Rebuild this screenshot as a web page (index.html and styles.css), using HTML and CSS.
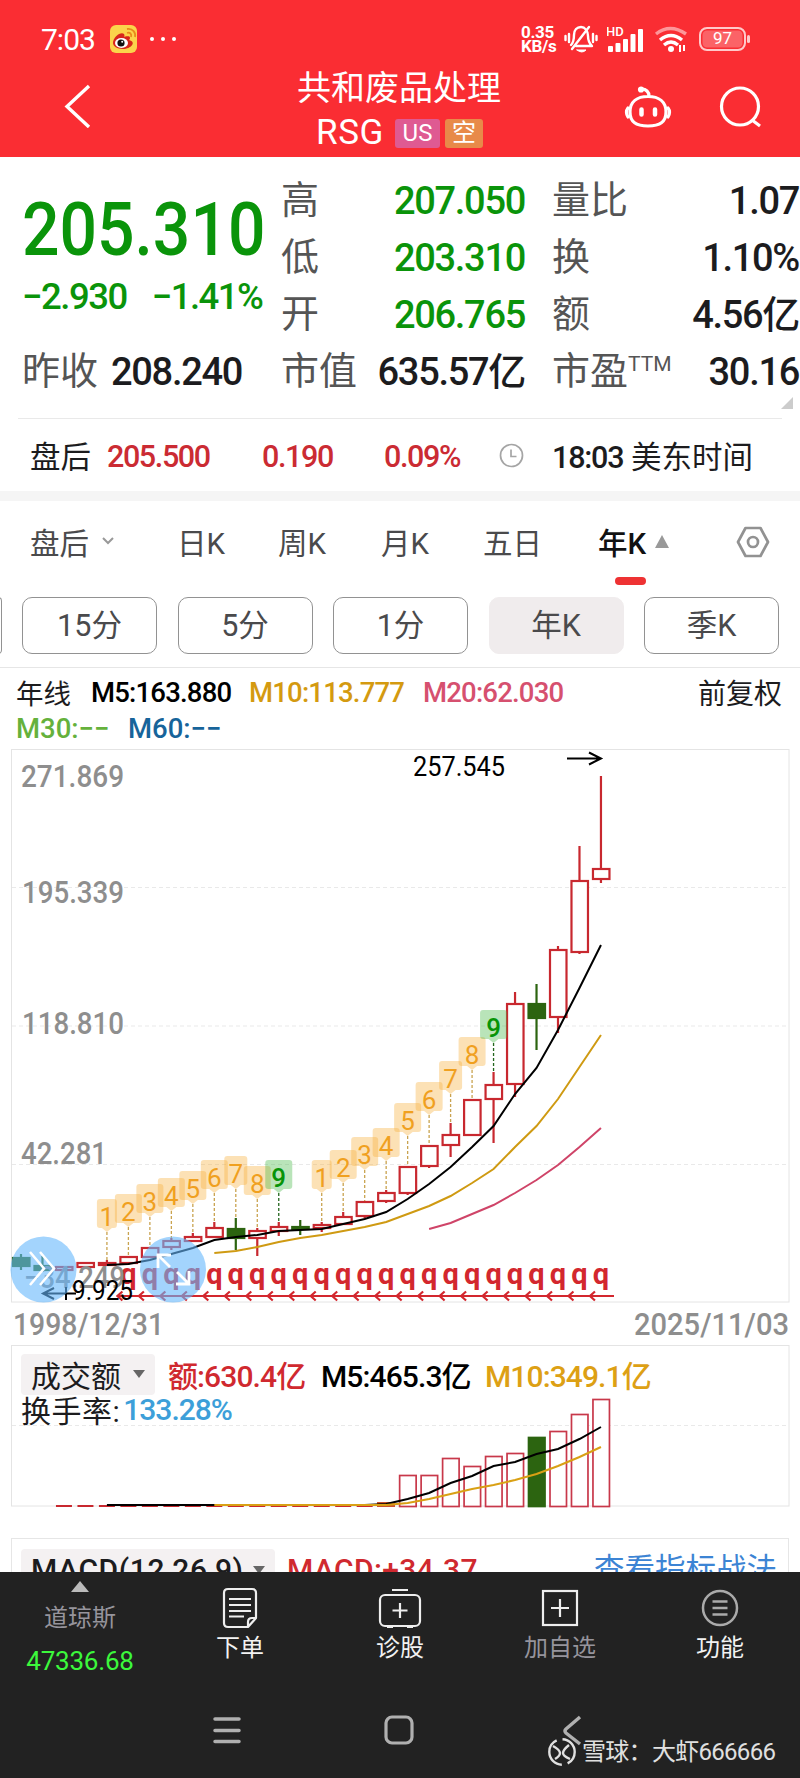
FILE: index.html
```
<!DOCTYPE html>
<html lang="zh-CN">
	<head>
		<meta charset="utf-8">
		<title>共和废品处理 RSG</title>
		<link rel="stylesheet" href="styles.css">
	</head>
	<body>
		<header class="top">
			<div class="status">
				<span class="time">7:03</span>
				<svg class="weibo" width="27" height="28" viewBox="0 0 27 28">
					<rect width="27" height="28" rx="6" fill="#fbd44b"/>
					<path d="M3 18c0-6 8-12 11-9 1 1 0 3 0 3s6-2 6 1c0 1-1 2-1 2 8 2 2 9-6 9-6 0-10-3-10-6z" fill="#d8261c"/>
					<ellipse cx="11.500" cy="18" rx="6.500" ry="5" fill="#fff"/>
					<circle cx="11" cy="18" r="3.600" fill="#111"/>
					<circle cx="12.200" cy="16.800" r="1" fill="#fff"/>
					<path d="M17 8c3-1 5 1 4 4M17 4c6-1 9 4 8 8" fill="none" stroke="#e98b1c" stroke-width="1.800"/>
				</svg>
				<span class="dots"><i></i><i></i><i></i></span>
				<span class="speed">0.35<br>KB/s</span>
				<svg class="bell" width="34" height="30" viewBox="0 0 34 30" fill="none" stroke="#fff" stroke-width="2.400" stroke-linecap="round">
					<path d="M12 22h16c-3-3-4-6-4-10 0-5-3-9-7-9s-7 3-7 8c0 4 0 7-3 10" stroke-linejoin="round"/>
					<path d="M25 3L8 25M5 10v8M1.500 12v4M29 10v8M32.500 12v4"/>
					<path d="M13 26h9q-4 4-9 0z" fill="#fff" stroke-width="1"/>
				</svg>
				<svg class="signal" width="37" height="28" viewBox="0 0 37 28">
					<text x="-1" y="11" class="hd">HD</text>
					<g fill="#fff"><rect x="1" y="21" width="5" height="6" rx="1"/><rect x="8.500" y="18" width="5" height="9" rx="1"/><rect x="16" y="14" width="5" height="13" rx="1"/><rect x="23.500" y="9" width="5" height="18" rx="1"/><rect x="31" y="4" width="5" height="23" rx="1"/></g>
				</svg>
				<svg class="wifi" width="34" height="28" viewBox="0 0 34 28" fill="none" stroke="#fff" stroke-width="3.400">
					<path d="M2 9q14-11 30 0" opacity=".5"/>
					<path d="M6 15q11-9 22 0M10 20q7-6 14 0"/>
					<circle cx="17" cy="24" r="3" fill="#fff" stroke="none"/>
					<path d="M26 20v7M30 26v-6" stroke-width="2"/>
				</svg>
				<span class="battery">97</span>
			</div>
			<div class="titlebar">
				<svg class="back" width="28" height="44" viewBox="0 0 28 44"><path d="M25 2L3 22.500 25 43" fill="none" stroke="#fff" stroke-width="3.400"/></svg>
				<div class="name">
					<h1>共和废品处理</h1>
					<p><span class="code">RSG</span><span class="tag us">US</span><span class="tag short">空</span></p>
				</div>
				<svg class="robot" width="48" height="44" viewBox="0 0 48 44" fill="none" stroke="#fff" stroke-width="3.200" stroke-linecap="round">
					<path d="M24 10.500C35 10.500 42 16 42 26S36 40 24 40 6 36 6 26 13 10.500 24 10.500zM25 10C25 6 22 3 18 3"/>
					<path d="M4 22q-3 4 0 9M44 22q3 4 0 9"/>
					<path d="M17.500 23.500v5M31 23.500v5" stroke-width="4.500"/>
					<circle cx="17" cy="3.500" r="1.500"/>
				</svg>
				<svg class="search" width="44" height="44" viewBox="0 0 44 44" fill="none" stroke="#fff" stroke-width="3.200"><circle cx="21" cy="20.500" r="18.500"/><path d="M33 34l8 6"/></svg>
			</div>
		</header>

		<section class="quote">
			<div class="price">
				<strong>205.310</strong>
				<div class="change"><span>−2.930</span><span>−1.41%</span></div>
				<div class="cell"><label>昨收</label><b>208.240</b></div>
			</div>
			<div class="col mid">
				<div class="cell"><label>高</label><b class="down">207.050</b></div>
				<div class="cell"><label>低</label><b class="down">203.310</b></div>
				<div class="cell"><label>开</label><b class="down">206.765</b></div>
				<div class="cell"><label>市值</label><b>635.57亿</b></div>
			</div>
			<div class="col last">
				<div class="cell"><label>量比</label><b>1.07</b></div>
				<div class="cell"><label>换</label><b>1.10%</b></div>
				<div class="cell"><label>额</label><b>4.56亿</b></div>
				<div class="cell"><label>市盈<sup>TTM</sup></label><b>30.16</b></div>
			</div>
			<i class="corner"></i>
		</section>

		<section class="after">
			<span class="lbl">盘后</span>
			<b class="a1">205.500</b>
			<b class="a2">0.190</b>
			<b class="a3">0.09%</b>
			<svg class="clock" width="25" height="25" viewBox="0 0 25 25" fill="none" stroke="#a5a5a5" stroke-width="1.700"><circle cx="12.500" cy="12.500" r="11"/><path d="M12 6.500v7h5.500"/></svg>
			<span class="at"><em>18:03</em> 美东时间</span>
		</section>

		<nav class="tabs">
			<span class="t0">盘后</span>
			<svg class="chev" width="14" height="10" viewBox="0 0 14 10"><path d="M2 2l5 5 5-5" fill="none" stroke="#999" stroke-width="2"/></svg>
			<span class="t1">日K</span>
			<span class="t2">周K</span>
			<span class="t3">月K</span>
			<span class="t4">五日</span>
			<span class="t5 on">年K</span>
			<i class="up"></i>
			<svg class="hex" width="34" height="32" viewBox="0 0 34 32" fill="none" stroke="#929292" stroke-width="2.700"><path d="M9.500 2h15L32 16l-7.500 14h-15L2 16z" stroke-linejoin="round"/><circle cx="17" cy="16" r="5"/></svg>
		</nav>
		<div class="periods">
			<span class="cut"></span><span>15分</span><span>5分</span><span>1分</span><span class="sel">年K</span><span>季K</span>
		</div>

		<section class="ma">
			<div class="line"><span class="m0">年线</span><span class="m5">M5:163.880</span><span class="m10">M10:113.777</span><span class="m20">M20:62.030</span><span class="adj">前复权</span></div>
			<div class="line second"><span class="m30">M30:−−</span><span class="m60">M60:−−</span></div>
		</section>

		<svg id="kline" width="800" height="606" viewBox="0 740 800 606"></svg>

		<section class="volume">
			<div class="line"><span class="pill">成交额 <i class="dn"></i></span><span class="v0">额:630.4亿</span><span class="v5">M5:465.3亿</span><span class="v10">M10:349.1亿</span></div>
			<div class="line rate">换手率:<span>133.28%</span></div>
			<svg id="vol" width="800" height="164" viewBox="0 1345 800 164"></svg>
		</section>

		<section class="macd">
			<span class="pill">MACD(12,26,9)<i class="dn"></i></span>
			<span class="val">MACD:+34.37</span>
			<a>查看指标战法</a>
		</section>

		<footer>
			<div class="menu">
				<div class="index"><i class="up"></i><span>道琼斯</span><b>47336.68</b></div>
				<div class="item">
					<svg width="38" height="42" viewBox="0 0 38 42" fill="none" stroke="#eee" stroke-width="2.200"><path d="M7 2h24q4 0 4 4v25l-8 9H7q-4 0-4-4V6q0-4 4-4zM35 31h-4q-4 0-4 4v5" stroke-linejoin="round"/><path d="M8 12h22M8 18h22M8 24h22M8 29.500h15"/></svg>
					<span>下单</span>
				</div>
				<div class="item">
					<svg width="44" height="42" viewBox="0 0 44 42" fill="none" stroke="#eee" stroke-width="2.200"><rect x="2" y="8" width="40" height="31" rx="5"/><path d="M14 3h16M22 16v15M14.500 23.500h15M9 40h6M29 40h6"/></svg>
					<span>诊股</span>
				</div>
				<div class="item dim">
					<svg width="38" height="42" viewBox="0 0 38 42" fill="none" stroke="#eee" stroke-width="2.200"><rect x="2" y="4" width="34" height="34"/><path d="M19 12v18M10 21h18"/></svg>
					<span>加自选</span>
				</div>
				<div class="item">
					<svg width="38" height="42" viewBox="0 0 38 42" fill="none" stroke="#aaa" stroke-width="2.500"><circle cx="19" cy="21" r="17"/><path d="M11.500 14.500h15M11.500 21h15M11.500 27.500h15"/></svg>
					<span>功能</span>
				</div>
			</div>
			<div class="sys">
				<svg width="30" height="30" viewBox="0 0 30 30" stroke="#b0b0b0" stroke-width="3.500" stroke-linecap="round"><path d="M3 4h24M3 15.500h24M3 26.500h24"/></svg>
				<svg width="32" height="32" viewBox="0 0 32 32"><rect x="3" y="3" width="26" height="26" rx="6" fill="none" stroke="#b0b0b0" stroke-width="3.200"/></svg>
				<svg width="22" height="34" viewBox="0 0 22 34"><path d="M18 4L4 16q-2 2 0 4l14 11" fill="none" stroke="#b0b0b0" stroke-width="3.400"/></svg>
			</div>
			<div class="mark">
				<svg width="30" height="30" viewBox="0 0 30 30" fill="none" stroke="#e0e0e0" stroke-width="2.400"><circle cx="15" cy="15" r="12.700" stroke-dasharray="34 6" stroke-dashoffset="20"/><path d="M6 9q7 4 7 7t-5 6M22 8q-6 5-6 8t7 6"/></svg>
				<span>雪球：大虾666666</span>
			</div>
		</footer>
		<script src="chart.js"></script>
	</body>
</html>
```
FILE: styles.css
```
* {
	box-sizing: border-box;
}
body {
	margin: 0;
	width: 800px;
	height: 1778px;
	overflow: hidden;
	background: #fff;
	color: #1c1c1e;
	font-family: Roboto, "Noto Sans CJK SC", sans-serif;
	display: flex;
	flex-direction: column;
}
body > * {
	flex-shrink: 0;
}
svg {
	display: block;
	flex-shrink: 0;
}
b, em {
	font-style: normal;
	font-weight: 500;
}
h1, p {
	margin: 0;
}
span, label, b, a {
	white-space: nowrap;
}

/* header */
.top {
	height: 157px;
	background: #fa2d33;
	color: #fff;
	padding-top: 22px;
}
.status {
	display: flex;
	align-items: center;
	height: 34px;
	padding-left: 41px;
}
.time {
	width: 69px;
	font-size: 30px;
	letter-spacing: -1px;
}
.dots {
	display: flex;
	gap: 7px;
	margin-left: 13px;
	width: 371px;
}
.dots i {
	width: 4px;
	height: 4px;
	border-radius: 50%;
	background: #fff;
}
.speed {
	width: 43px;
	font-size: 17px;
	line-height: 14px;
	font-weight: 700;
	letter-spacing: -.3px;
}
.signal {
	margin-left: 9px;
}
.hd {
	font: 500 13px Roboto;
	fill: #fff;
}
.wifi {
	margin-left: 10px;
}
.battery {
	position: relative;
	margin-left: 11px;
	width: 47px;
	height: 24px;
	border: 2.500px solid #ffc9ca;
	border-radius: 8px;
	background: #fb6367;
	box-shadow: inset 0 0 0 1.500px #fa2d33;
	font-size: 17px;
	line-height: 19px;
	text-align: center;
}
.battery::after {
	content: "";
	position: absolute;
	right: -6px;
	top: 6px;
	width: 3px;
	height: 8px;
	border-radius: 2px;
	background: #ffc9ca;
}
.titlebar {
	display: flex;
	height: 101px;
	padding-left: 64px;
}
.back {
	margin-top: 28px;
}
.name {
	width: 206px;
	margin-left: 205px;
	padding-top: 9px;
}
.name h1 {
	font-size: 34px;
	line-height: 46px;
	font-weight: 400;
	white-space: nowrap;
}
.name p {
	display: flex;
	align-items: center;
	height: 44px;
	padding-left: 19px;
	margin-top: 0;
}
.code {
	width: 79px;
	font-size: 35px;
	line-height: 42px;
	letter-spacing: .6px;
}
.tag {
	height: 29px;
	border-radius: 3px;
	font-size: 24px;
	line-height: 29px;
	text-align: center;
}
.us {
	width: 45px;
	background: #df5a92;
}
.short {
	width: 38px;
	margin-left: 5px;
	background: #e88a49;
}
.robot {
	margin: 30px 0 0 121px;
}
.search {
	margin: 30px 0 0 47px;
}

/* quote */
.quote {
	position: relative;
	display: flex;
	height: 262px;
	padding: 14px 1px 0 22px;
}
.quote::after {
	content: "";
	position: absolute;
	left: 18px;
	right: 18px;
	bottom: 0;
	height: 1px;
	background: #e9e9e9;
}
.price {
	width: 259px;
	color: #0a940a;
}
.price strong {
	display: block;
	height: 102px;
	font-size: 75px;
	line-height: 116px;
	font-weight: 500;
	transform: scaleX(.88);
	transform-origin: left;
}
.change {
	display: flex;
	gap: 25px;
	height: 69px;
	font-size: 36.500px;
	font-weight: 500;
	line-height: 48px;
	letter-spacing: -1.500px;
}
.cell {
	display: flex;
	justify-content: space-between;
	height: 57px;
	line-height: 58px;
	font-size: 38px;
	letter-spacing: -1.300px;
	color: #1c1c1e;
}
.cell label {
	font-size: 38px;
	letter-spacing: 0;
	color: #555;
}
.cell b {
	padding-top: 1px;
}
.price .cell {
	justify-content: flex-start;
	gap: 13px;
}
.mid {
	width: 245px;
}
.last {
	width: 248px;
	margin-left: 27px;
}
.cell .down {
	color: #0a940a;
}
.cell sup {
	display: inline-block;
	font-size: 21px;
	line-height: 20px;
	vertical-align: 13px;
	letter-spacing: 0;
}
.corner {
	position: absolute;
	right: 7px;
	bottom: 10px;
	border-left: 12px solid transparent;
	border-bottom: 12px solid #ccc;
}
.after {
	display: flex;
	align-items: center;
	height: 72px;
	padding: 0 0 0 30px;
	font-size: 30.500px;
}
.after b {
	color: #cb2b33;
	padding-top: 2px;
	letter-spacing: -1.400px;
}
.lbl {
	width: 77px;
}
.a1 {
	width: 155px;
}
.a2 {
	width: 122px;
}
.a3 {
	width: 115px;
}
.clock {
	margin-right: 28px;
}
.at em {
	letter-spacing: -1.200px;
}

/* tabs */
.tabs {
	display: flex;
	align-items: center;
	height: 96px;
	padding: 0 0 6px 30px;
	border-top: 10px solid #f5f5f5;
	font-size: 29.500px;
	color: #4a4a4c;
}
.chev {
	margin: 0 62px 0 11px;
	width: 14px;
}
.t0 {
	width: 60px;
}
.t1 {
	width: 101px;
}
.t2 {
	width: 103px;
}
.t3 {
	width: 102px;
}
.t4 {
	width: 115px;
}
.on {
	position: relative;
	width: 57px;
	color: #111;
	font-weight: 500;
}
.on::after {
	content: "";
	position: absolute;
	left: 17px;
	top: 57px;
	width: 31px;
	height: 8px;
	border-radius: 4px;
	background: #ee3233;
}
.up {
	border: 7px solid transparent;
	border-top: 0;
	border-bottom: 13px solid #999;
}
.hex {
	margin: 2px 0 0 67px;
}
.periods {
	display: flex;
	gap: 20.500px;
	height: 81px;
	padding-top: 10px;
	border-bottom: 1px solid #e6e6e6;
}
.periods span {
	width: 135px;
	height: 57px;
	border: 1.500px solid #929292;
	border-radius: 10px;
	font-size: 30.500px;
	line-height: 56px;
	text-align: center;
	color: #4a4a4c;
}
.periods .cut {
	width: 8px;
	margin-left: -6.500px;
	border-left: 0;
}
.periods .sel {
	border-color: #f0eced;
	background: #f0eced;
}

/* moving averages */
.ma {
	height: 72px;
	padding-left: 16px;
}
.line {
	display: flex;
	align-items: center;
	height: 48px;
	font-size: 27.500px;
	font-weight: 500;
	letter-spacing: -.8px;
}
.second {
	height: 24px;
}
.m0, .adj {
	font-weight: 400;
	letter-spacing: 0;
}
.m0 {
	width: 75px;
}
.m5 {
	width: 158px;
	color: #000;
}
.m10 {
	width: 174px;
	color: #d49a10;
}
.m20 {
	width: 275px;
	color: #d6506f;
}
.adj {
	font-size: 28px;
}
.m30 {
	width: 112px;
	color: #65b13c;
	letter-spacing: 0;
}
.m60 {
	color: #17649a;
	letter-spacing: 0;
}

/* k-line drawing */
.axis {
	font: 500 30.500px Roboto;
	fill: #8e8e8e;
}
.peak {
	font: 27px Roboto;
	fill: #000;
}
.q {
	font: 700 29px Roboto;
	fill: #d3272e;
	text-anchor: middle;
}
.num {
	font: 26px Roboto;
	fill: #f0a01f;
	text-anchor: middle;
}
.num.nine {
	fill: #079407;
	font-weight: 500;
}

/* volume */
.volume {
	position: relative;
	height: 193px;
	padding: 7px 0 0 21px;
	margin-top: -1px;
}
#vol {
	position: absolute;
	left: 0;
	top: 0;
}
.volume .line {
	position: relative;
	z-index: 1;
	height: 44px;
	font-size: 30px;
	letter-spacing: -.9px;
}
.pill {
	display: flex;
	align-items: center;
	justify-content: space-between;
	width: 134px;
	height: 41px;
	padding: 0 10px;
	border-radius: 4px;
	background: #f4f1f2;
	letter-spacing: 0;
	font-weight: 400;
}
.dn {
	border: 6px solid transparent;
	border-bottom: 0;
	border-top: 8px solid #666;
}
.v0 {
	width: 153px;
	margin-left: 13px;
	color: #d0292f;
}
.v5 {
	width: 164px;
	color: #000;
}
.v10 {
	color: #dda014;
}
.volume .rate {
	height: 26px;
	letter-spacing: .5px;
	font-weight: 400;
}
.rate span {
	color: #3d9fd9;
	font-weight: 500;
	letter-spacing: -1px;
	margin-left: 3px;
}

.macd {
	display: flex;
	height: 34px;
	margin: 0 11px;
	padding: 10px 10px 0 9px;
	border: 1px solid #e6e6e6;
	border-bottom: 0;
	overflow: hidden;
	font-size: 30px;
	line-height: 41px;
}
.macd .pill {
	width: 254px;
	font-weight: 500;
	letter-spacing: .6px;
}
.macd .val {
	width: 307px;
	margin-left: 12px;
	color: #d0292f;
	font-weight: 500;
	letter-spacing: .4px;
}
.macd a {
	color: #3c84d4;
	font-size: 30.500px;
}

/* bottom bar */
footer {
	position: relative;
	height: 206px;
	background: #222;
	color: #f2f2f2;
}
.menu {
	display: grid;
	grid-template-columns: repeat(5, 160px);
	height: 137px;
}
.item, .index {
	display: flex;
	flex-direction: column;
	align-items: center;
	font-size: 24px;
}
.item {
	padding-top: 15px;
}
.item span {
	margin-top: 1px;
	line-height: 36px;
}
.dim span, .index span {
	color: #96949c;
}
.index {
	padding-top: 9px;
}
.index .up {
	border-width: 0 9px 11px;
	border-bottom-color: #bbb;
}
.index span {
	margin-top: 8px;
	line-height: 36px;
}
.index b {
	margin-top: 8px;
	font-size: 26px;
	line-height: 34px;
	font-weight: 400;
	letter-spacing: -.2px;
	color: #3cf83c;
}
.sys {
	display: flex;
	align-items: center;
	height: 42px;
	padding-left: 212px;
}
.sys svg + svg {
	margin-left: 141px;
}
.sys svg:last-child {
	margin-left: 147px;
}
.mark {
	position: absolute;
	left: 547px;
	bottom: 8px;
	display: flex;
	align-items: center;
	gap: 5px;
	font-size: 24px;
	line-height: 36px;
	letter-spacing: -.7px;
	color: #e0e0e0;
}
```
FILE: chart.js
```
// one row per year: top and bottom of the body, high, low, closed lower
var candles = [
	[1257, 1266, 1254, 1270, 1], [1265, 1270, 1256, 1272, 1], [1266, 1270, 1266, 1270],
	[1262, 1267, 1262, 1267], [1262, 1265, 1260, 1266], [1256, 1263, 1256, 1265],
	[1247, 1257, 1247, 1257], [1240, 1247, 1238, 1250], [1236, 1241, 1233, 1242],
	[1227, 1237, 1222, 1238], [1228, 1238, 1218, 1250, 1], [1230, 1238, 1228, 1256],
	[1226, 1231, 1222, 1236], [1226, 1229, 1220, 1235, 1], [1224, 1228, 1222, 1232],
	[1216, 1224, 1212, 1224], [1201, 1216, 1201, 1218], [1192, 1201, 1190, 1203],
	[1166, 1193, 1166, 1195], [1145, 1166, 1145, 1168], [1134, 1145, 1123, 1157],
	[1099, 1135, 1099, 1136], [1084, 1099, 1072, 1143], [1003, 1084, 992, 1097],
	[1003, 1018, 984, 1050, 1], [949, 1017, 946, 1033], [880, 952, 846, 954], [868, 879, 776, 883]
];
var ma5 = [1265, 1264, 1260, 1254, 1248, 1240, 1237, 1235, 1231, 1230, 1229, 1224, 1219, 1212, 1199, 1184, 1167, 1147, 1126, 1094, 1068, 1030, 988, 945];
var ma10 = [1253, 1251, 1247, 1242, 1238, 1235, 1231, 1227, 1222, 1214, 1206, 1196, 1183, 1169, 1147, 1126, 1099, 1067, 1035];
var ma20 = [1229, 1223, 1214, 1205, 1193, 1180, 1165, 1147, 1128];
// top of each numbered flag
var flags = [
	[4, [1199, 1194, 1184, 1178, 1171, 1160, 1156, 1166, 1160]],
	[14, [1160, 1150, 1137, 1128, 1103, 1082, 1061, 1037, 1010]]
];
var volume = [1475, 1475, 1458, 1466, 1456, 1453, 1437, 1431, 1414, 1399];
var vma5 = [1505, 1505, 1505, 1505, 1505, 1505, 1505, 1505, 1505, 1505, 1505, 1505, 1505, 1504, 1499, 1493, 1483, 1476, 1466, 1462, 1454, 1449, 1439, 1427];
var vma10 = [1505, 1505, 1505, 1505, 1505, 1505, 1505, 1505, 1505, 1503, 1499, 1494, 1489, 1485, 1480, 1474, 1466, 1457, 1447];

function X(i) {
	return 21 + i * 21.48;
}
function line(start, ys, color) {
	var pts = ys.map(function (y, i) { return X(start + i) + "," + y; }).join(" ");
	return '<polyline points="' + pts + '" fill="none" stroke="' + color + '" stroke-width="2"/>';
}
function path(d, color, w, extra) {
	return '<path d="' + d + '" fill="none" stroke="' + color + '" stroke-width="' + w + '" ' + (extra || "") + '/>';
}
function text(cls, x, y, s, len) {
	return '<text class="' + cls + '" x="' + x + '" y="' + y + '"' + (len ? ' textLength="' + len + '" lengthAdjust="spacingAndGlyphs"' : '') + '>' + s + '</text>';
}

function drawKline() {
	var o = '<rect x="11.5" y="749.5" width="777.5" height="552.500" fill="none" stroke="#e4e4e4"/>';
	o += path("M12 887.500H789M12 1026H789M12 1164.500H789", "#e9e9e9", 1, 'stroke-dasharray="4 3"');
	o += text("axis", 21, 787, "271.869", 103) + text("axis", 22, 903, "195.339", 102);
	o += text("axis", 22, 1034, "118.810", 102) + text("axis", 21, 1164, "42.281", 86);
	o += text("peak", 413, 776, "257.545", 92);
	o += path("M567 758.500H601M589 752.500L601 758.500 589 764.500", "#000", 2);

	candles.forEach(function (c, i) {
		var x = X(i), col = c[4] ? "#2c6410" : "#c8282f";
		o += path("M" + x + " " + c[2] + "V" + c[0] + "M" + x + " " + c[1] + "V" + c[3], col, 2.2);
		o += '<rect x="' + (x - 8) + '" y="' + (c[0] + 1) + '" width="16.500" height="' + Math.max(c[1] - c[0] - 1, 1) + '" fill="' + (c[4] ? col : "#fff") + '" stroke="' + col + '" stroke-width="2.200"/>';
	});
	flags.forEach(function (f) {
		f[1].forEach(function (y, k) {
			var i = f[0] + k, x = X(i), nine = k == 8;
			var w = k == 0 ? 10 : k == 6 ? 11.5 : 13.5;
			o += path("M" + x + " " + (y + 33) + "V" + candles[i][2], nine ? "#23651c" : "#c9a350", 1.3, 'stroke-dasharray="3 2"');
			o += '<path d="M' + (x - w + 3) + ' ' + y + 'h' + (2 * w - 6) + 'q3 0 3 3v23q0 3 -3 3h-' + (w - 8) + 'l-5 4l-5 -4h-' + (w - 8) + 'q-3 0 -3 -3v-23q0 -3 3 -3z" fill="' + (nine ? "#48b848" : "#f8b03c") + '" fill-opacity=".38"/>';
			o += text(nine ? "num nine" : "num", x, y + 27, k + 1);
		});
	});
	o += line(4, ma5, "#000") + line(9, ma10, "#cf9a12") + line(19, ma20, "#cf4468");

	var d = "M118 1296H614";
	for (var i = 5; i < 28; i++) {
		o += text("q", X(i), 1284, "q");
		d += "M" + (X(i) - 6) + " 1291.500L" + (X(i) - 11) + " 1296l5 4.500";
	}
	o += path(d, "#d3272e", 2.2);
	o += text("axis", 24, 1288, "−34.249", 101) + text("peak", 72, 1300, "9.925", 61);
	o += path("M76 1293.500H43M54 1288L43 1293.500 54 1299M66 1287V1300", "#000", 2);
	// round buttons over the chart
	o += '<circle cx="43.500" cy="1269.500" r="33" fill="#66b8fb" fill-opacity=".6"/><circle cx="173" cy="1269.500" r="33" fill="#66b8fb" fill-opacity=".6"/>';
	o += path("M30 1252L44 1268.500 30 1285M40 1252L54 1268.500 40 1285", "#fff", 2.5);
	o += path("M158 1268V1255H171M158 1255L170 1267M189 1271V1284H176M189 1284L177 1272", "#fff", 2.800);
	o += text("axis", 13, 1335, "1998/12/31", 151) + text("axis", 634, 1335, "2025/11/03", 155);
	document.getElementById("kline").innerHTML = o;
}

function drawVolume() {
	var o = '<rect x="11.500" y="1345.500" width="777.500" height="160.500" fill="none" stroke="#e4e4e4"/>';
	o += path("M12 1425.500H789", "#e9e9e9", 1, 'stroke-dasharray="4 3"');
	for (var i = 2; i < 17; i++) {
		o += path("M" + (X(i) - 8) + " 1506H" + (X(i) + 8), "#c8282f", 2);
	}
	o += '<rect x="377" y="1502" width="18" height="5" fill="#c8522f"/>';
	volume.forEach(function (y, k) {
		var down = k == 6;
		o += '<rect x="' + (X(18 + k) - 8) + '" y="' + (y + .5) + '" width="16.500" height="' + (1506 - y) + '" fill="' + (down ? "#2c6410" : "#fff") + '" stroke="' + (down ? "#2c6410" : "#c8384a") + '" stroke-width="1.700"/>';
	});
	o += line(4, vma5, "#000") + line(9, vma10, "#d9a014");
	document.getElementById("vol").innerHTML = o;
}

drawKline();
drawVolume();
```
